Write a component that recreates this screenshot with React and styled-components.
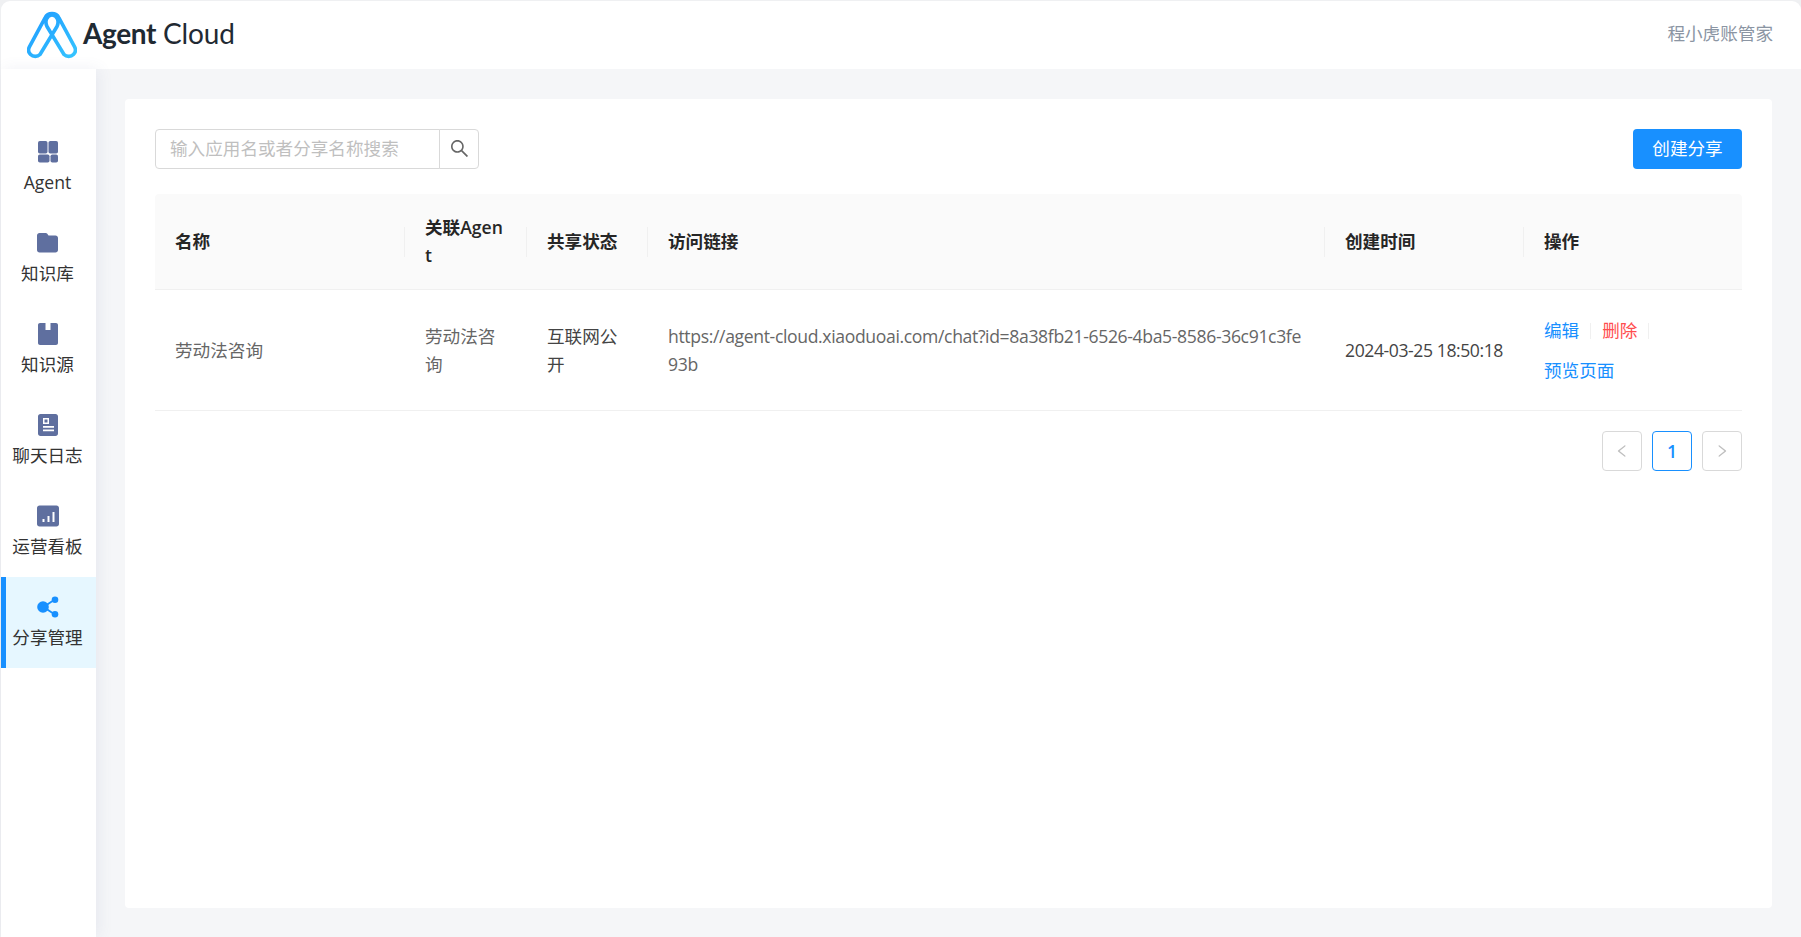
import React from "react";
import styled, { createGlobalStyle } from "styled-components";

const FONT = `"Open Sans", "Noto Sans CJK SC", sans-serif`;

const Global = createGlobalStyle`
  html, body { margin: 0; padding: 0; height: 100%; background: #eff0f2; }
  * { box-sizing: border-box; }
  body { font-family: ${FONT}; font-size: 17.6px; color: #666; overflow: hidden; }
`;

const Page = styled.div`
  height: 100vh;
  display: flex;
  flex-direction: column;
  padding: 1px 0 0 1px;
`;
const Header = styled.header`
  flex: 0 0 68px;
  background: #fff;
  border-radius: 9px 9px 0 0;
  display: flex;
  align-items: center;
  justify-content: space-between;
  padding: 0 28px 0 26px;
`;
const Brand = styled.div`
  display: flex;
  align-items: center;
  gap: 6px;
  margin-top: -1px;
`;
const BrandText = styled.div`
  font-family: Lato, sans-serif;
  font-size: 28px;
  line-height: 1;
  color: #1f2a33;
  display: flex;
  gap: 7px;
  margin-top: -4px;
  letter-spacing: -0.1px;
`;
const BrandStrong = styled.span`
  font-weight: 700;
  letter-spacing: -0.4px;
`;
const Account = styled.div`
  color: #8b95a3;
  font-size: 17.6px;
  margin-top: -6px;
`;
const Body = styled.div`
  flex: 1;
  display: flex;
  min-height: 0;
  background: #f5f6f8;
`;
const Sidebar = styled.nav`
  flex: 0 0 95px;
  background: #fff;
  box-shadow: 3px 0 14px rgba(90, 100, 150, 0.09);
  padding-top: 53px;
  position: relative;
`;
const NavItem = styled.div`
  height: 91px;
  display: flex;
  flex-direction: column;
  align-items: center;
  padding-top: 18px;
  padding-right: 7px;
  border-left: 5px solid ${p => (p.$active ? "#1890ff" : "transparent")};
  background: ${p => (p.$active ? "#e6f7ff" : "transparent")};
  color: #333;
  font-size: 17.6px;
  line-height: 24px;
`;
const NavIcon = styled.svg`
  width: 24px;
  height: 24px;
  margin-bottom: 6px;
  flex: none;
  fill: ${p => (p.$active ? "#1890ff" : "#5f6f9f")};
`;
const Main = styled.main`
  flex: 1;
  padding: 30px 29px 29px;
  min-width: 0;
`;
const Card = styled.section`
  height: 100%;
  background: #fff;
  border-radius: 4px;
  padding: 30px;
`;
const Toolbar = styled.div`
  display: flex;
  justify-content: space-between;
  margin-bottom: 25px;
`;
const SearchGroup = styled.div`
  display: flex;
`;
const SearchInput = styled.input`
  width: 285px;
  height: 40px;
  border: 1px solid #d9d9d9;
  border-radius: 4px 0 0 4px;
  padding: 0 14px 2px;
  font: inherit;
  outline: none;
  &::placeholder { color: #bfbfbf; opacity: 1; }
`;
const SearchButton = styled.button`
  width: 40px;
  height: 40px;
  margin-left: -1px;
  border: 1px solid #d9d9d9;
  border-radius: 0 4px 4px 0;
  background: #fff;
  color: #666;
  padding: 0 0 2px;
  display: flex;
  align-items: center;
  justify-content: center;
`;
const PrimaryButton = styled.button`
  width: 109px;
  height: 40px;
  border: 0;
  border-radius: 4px;
  background: #1890ff;
  color: #fff;
  font: inherit;
  padding: 0 0 4px;
`;
const Table = styled.table`
  width: 100%;
  table-layout: fixed;
  border-collapse: separate;
  border-spacing: 0;
  line-height: 27.6px;
`;
const Th = styled.th`
  position: relative;
  height: 96px;
  padding: 0 20px;
  background: #fafafa;
  border-bottom: 1px solid #f0f0f0;
  color: #262626;
  font-weight: 600;
  text-align: left;
  word-break: break-all;
  &:first-child { border-top-left-radius: 4px; }
  &:last-child { border-top-right-radius: 4px; }
  &:not(:last-child)::after {
    content: "";
    position: absolute;
    top: 50%;
    right: 0;
    width: 1px;
    height: 30px;
    transform: translateY(-50%);
    background: #f0f0f0;
  }
`;
const Td = styled.td`
  height: 121px;
  padding: 2px 20px 0;
  border-bottom: 1px solid #f0f0f0;
  color: ${p => p.$color || "#666"};
  letter-spacing: ${p => p.$tight || "normal"};
  word-break: break-all;
`;
const Actions = styled.div`
  display: flex;
  flex-wrap: wrap;
  align-items: center;
  gap: 12px 11px;
`;
const ActionLink = styled.a`
  color: ${p => (p.$danger ? "#ff4d4f" : "#1890ff")};
`;
const ActionSplit = styled.span`
  width: 1px;
  height: 16px;
  background: #f0f0f0;
`;
const Pager = styled.div`
  display: flex;
  justify-content: flex-end;
  gap: 10px;
  margin-top: 20px;
`;
const PageButton = styled.div`
  width: 40px;
  height: 40px;
  display: flex;
  align-items: center;
  justify-content: center;
  border: 1px solid ${p => (p.$active ? "#1890ff" : "#d9d9d9")};
  border-radius: 4px;
  color: ${p => (p.$active ? "#1890ff" : "#bfbfbf")};
  font-weight: ${p => (p.$active ? 600 : 400)};
`;

const columns = [
  ["名称", 250],
  ["关联Agent", 122],
  ["共享状态", 121],
  ["访问链接", 677],
  ["创建时间", 199],
  ["操作", 218],
];

const Logo = () => (
  <svg width="50" height="48" viewBox="0 0 50 48" aria-hidden="true">
    <defs>
      <linearGradient id="lg" x1="0" y1="0" x2="1" y2="1">
        <stop offset="0" stopColor="#1e9bff" />
        <stop offset="1" stopColor="#35c4ff" />
      </linearGradient>
    </defs>
    <g fill="none" stroke="url(#lg)" strokeWidth="3.6" strokeLinecap="round" strokeLinejoin="round">
      <path d="M13 43.5C10.5 46 6 46 3.6 43.6C1.4 41.4 1 38.5 2.4 35.8L18.2 6.6C20.8 1.2 29.2 1.2 31.8 6.6L47.6 35.8C49 38.5 48.6 41.4 46.4 43.6C44 46 39.5 46 37 43.5L20 15.5C17.4 10 20 4 25 4C30 4 32.6 10 30 15.5Z" />
      <path d="M18 35H32" />
    </g>
  </svg>
);

const AntIcon = ({ d, size }) => (
  <svg width={size} height={size} viewBox="64 64 896 896" fill="currentColor" aria-hidden="true">
    <path d={d} />
  </svg>
);

const SEARCH_D =
  "M909.6 854.5L649.9 594.8C690.2 542.7 712 479 712 412c0-80.2-31.3-155.4-87.9-212.1-56.6-56.7-132-87.9-212.1-87.9s-155.5 31.3-212.1 87.9C143.2 256.5 112 331.8 112 412c0 80.1 31.3 155.5 87.9 212.1C256.5 680.8 331.8 712 412 712c67 0 130.6-21.8 182.7-62l259.7 259.6a8.2 8.2 0 0 0 11.6 0l43.6-43.5a8.2 8.2 0 0 0 0-11.6zM570.4 570.4C528 612.7 471.8 636 412 636s-116-23.3-158.4-65.6C211.3 528 188 471.8 188 412s23.3-116.1 65.6-158.4C296 211.3 352.2 188 412 188s116.1 23.2 158.4 65.6S636 352.2 636 412s-23.3 116.1-65.6 158.4z";
const LEFT_D =
  "M724 218.3V141c0-6.7-7.7-10.4-12.9-6.3L260.3 486.8a31.86 31.86 0 0 0 0 50.3l450.8 352.1c5.3 4.1 12.9.4 12.9-6.3v-77.3c0-4.9-2.3-9.6-6.1-12.6l-360-281 360-281.1c3.8-3 6.1-7.7 6.1-12.6z";
const RIGHT_D =
  "M765.7 486.8L314.9 134.7A7.97 7.97 0 0 0 302 141v77.3c0 4.9 2.3 9.6 6.1 12.6l360 281.1-360 281.1c-3.9 3-6.1 7.7-6.1 12.6V883c0 6.7 7.7 10.4 12.9 6.3l450.8-352.1a31.96 31.96 0 0 0 0-50.4z";

const navItems = [
  {
    label: "Agent",
    icon: (
      <>
        <rect x="2" y="1" width="9.5" height="12.5" rx="1.8" />
        <rect x="12.5" y="1" width="9.5" height="12.5" rx="1.8" />
        <rect x="2" y="14.5" width="11.5" height="8" rx="1.8" />
        <rect x="14.5" y="14.5" width="7.5" height="8" rx="1.8" />
      </>
    ),
  },
  {
    label: "知识库",
    icon: <path d="M3.5 2h6.2c.7 0 1.2.3 1.6.8l1.2 1.7h7c1.4 0 2.5 1.1 2.5 2.5v12c0 1.4-1.1 2.5-2.5 2.5h-16C2.1 21.5 1 20.4 1 19V4.5C1 3.1 2.1 2 3.5 2z" />,
  },
  {
    label: "知识源",
    icon: <path d="M4 1h5.5v7h5V1H20c1.1 0 2 .9 2 2v18c0 1.1-.9 2-2 2H4c-1.1 0-2-.9-2-2V3c0-1.1.9-2 2-2z" />,
  },
  {
    label: "聊天日志",
    icon: (
      <path
        fillRule="evenodd"
        d="M4.5 1h15C21 1 22 2 22 3.5v17c0 1.5-1 2.5-2.5 2.5h-15C3 23 2 22 2 20.5v-17C2 2 3 1 4.5 1zM7 5v6h6V5H7zm1.5 1.5h3v3h-3v-3zM7 13v1.8h11V13H7zm0 3.5v1.8h11v-1.8H7z"
      />
    ),
  },
  {
    label: "运营看板",
    icon: (
      <path
        fillRule="evenodd"
        d="M3.5 1.5h17c1.4 0 2.5 1.1 2.5 2.5v16c0 1.4-1.1 2.5-2.5 2.5h-17C2.1 22.5 1 21.4 1 20V4c0-1.4 1.1-2.5 2.500-2.500zM6.500 15v3h2v-3h-2zm5-3v6h2v-6h-2zm5-4v10h2V8h-2z"
      />
    ),
  },
  {
    label: "分享管理",
    active: true,
    icon: (
      <>
        <circle cx="7" cy="12" r="5.8" />
        <circle cx="19" cy="4.8" r="3.3" />
        <circle cx="19" cy="19.2" r="3.3" />
        <path d="M8 10.5l10-6.5.8 1.5-9.5 6.500 9.500 6.500-.8 1.500-10-6.500z" />
      </>
    ),
  },
];

export default function App() {
  return (
    <>
      <Global />
      <Page>
        <Header>
          <Brand>
            <Logo />
            <BrandText>
              <BrandStrong>Agent</BrandStrong>
              <span>Cloud</span>
            </BrandText>
          </Brand>
          <Account>程小虎账管家</Account>
        </Header>
        <Body>
          <Sidebar>
            {navItems.map(item => (
              <NavItem key={item.label} $active={item.active}>
                <NavIcon viewBox="0 0 24 24" $active={item.active}>
                  {item.icon}
                </NavIcon>
                {item.label}
              </NavItem>
            ))}
          </Sidebar>
          <Main>
            <Card>
              <Toolbar>
                <SearchGroup>
                  <SearchInput placeholder="输入应用名或者分享名称搜索" />
                  <SearchButton>
                    <AntIcon d={SEARCH_D} size={19} />
                  </SearchButton>
                </SearchGroup>
                <PrimaryButton>创建分享</PrimaryButton>
              </Toolbar>
              <Table>
                <colgroup>
                  {columns.map(([name, w]) => (
                    <col key={name} width={w} />
                  ))}
                </colgroup>
                <thead>
                  <tr>
                    {columns.map(([name]) => (
                      <Th key={name}>{name}</Th>
                    ))}
                  </tr>
                </thead>
                <tbody>
                  <tr>
                    <Td>劳动法咨询</Td>
                    <Td>劳动法咨询</Td>
                    <Td $color="#444">互联网公开</Td>
                    <Td $tight="-0.36px">https://agent-cloud.xiaoduoai.com/chat?id=8a38fb21-6526-4ba5-8586-36c91c3fe93b</Td>
                    <Td $color="#444" $tight="-0.42px">2024-03-25 18:50:18</Td>
                    <Td>
                      <Actions>
                        <ActionLink>编辑</ActionLink>
                        <ActionSplit />
                        <ActionLink $danger>删除</ActionLink>
                        <ActionSplit />
                        <ActionLink>预览页面</ActionLink>
                      </Actions>
                    </Td>
                  </tr>
                </tbody>
              </Table>
              <Pager>
                <PageButton>
                  <AntIcon d={LEFT_D} size={14} />
                </PageButton>
                <PageButton $active>1</PageButton>
                <PageButton>
                  <AntIcon d={RIGHT_D} size={14} />
                </PageButton>
              </Pager>
            </Card>
          </Main>
        </Body>
      </Page>
    </>
  );
}
